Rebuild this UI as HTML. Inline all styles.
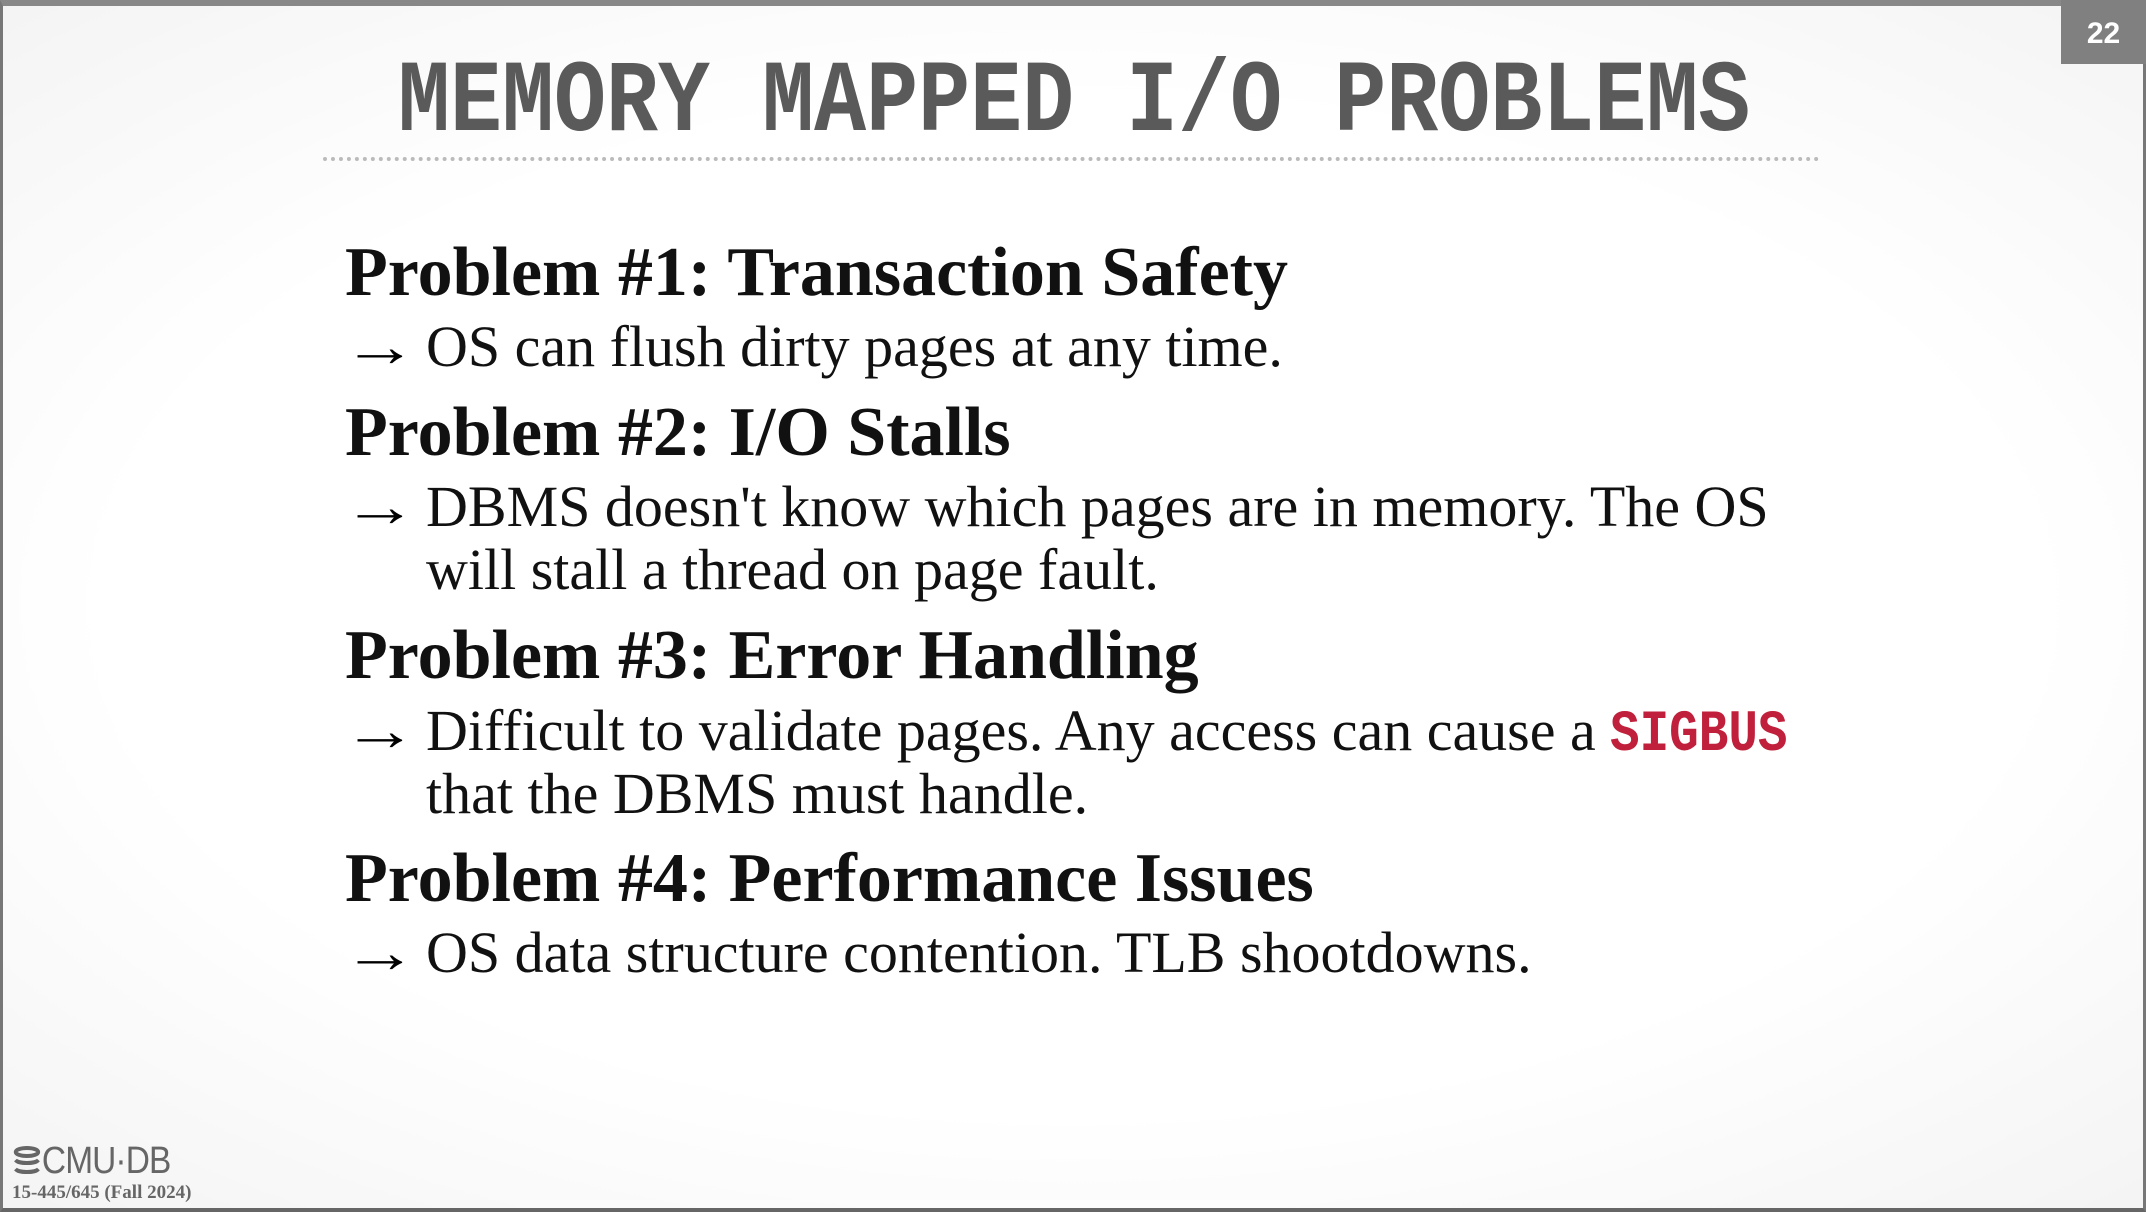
<!DOCTYPE html>
<html><head><meta charset="utf-8"><style>
html,body{margin:0;padding:0}
body{width:2146px;height:1212px;position:relative;overflow:hidden;
background:radial-gradient(ellipse 75% 70% at 50% 50%,#ffffff 60%,#f3f3f3 100%);
font-family:"Liberation Serif",serif;}
.frame{position:absolute;left:0;top:0;width:2146px;height:1212px;box-sizing:border-box;border:3px solid #777;border-top:6px solid #888;border-bottom:4px solid #666}
.pg{position:absolute;right:0;top:0;width:85px;height:64px;background:#808080;color:#fff;font:bold 30px "Liberation Sans",sans-serif;text-align:center;line-height:68px}
.title{position:absolute;left:398px;top:53px;font:bold 90px/1 "Liberation Mono",monospace;color:#5a5a5a;transform:scale(0.963,1.135);transform-origin:0 0;white-space:nowrap}
.dots{position:absolute;left:323px;top:157px;width:1497px;border-top:4px dotted #bbb}
.l{position:absolute;white-space:nowrap;color:#111;line-height:1}
.h{font-weight:bold;font-size:70px;left:345px}
.b{font-size:58px;left:426px}
.a{position:absolute;left:342px;font-size:58px;line-height:1;transform:scaleX(1.3);transform-origin:0 0}
.sig{display:inline-block;font:bold 58px/1 "Liberation Mono",monospace;color:#c0203b;transform:scaleX(0.85);transform-origin:0 0}
.logo{position:absolute;left:12px;top:1140px;font:38px "Liberation Sans",sans-serif;color:#666;letter-spacing:-1px;transform:scaleX(0.88);transform-origin:0 0;white-space:nowrap}
.course{position:absolute;left:12px;top:1182px;font:bold 19px "Liberation Serif",serif;color:#666}
</style></head><body>
<div class="frame"></div>
<div class="pg">22</div>
<div class="title">MEMORY MAPPED I/O PROBLEMS</div>
<div class="dots"></div>

<div class="l h" style="top:238px">Problem #1: Transaction Safety</div>
<div class="a" style="top:318px">→</div><div class="l b" style="top:318px">OS can flush dirty pages at any time.</div>

<div class="l h" style="top:398px">Problem #2: I/O Stalls</div>
<div class="a" style="top:478px">→</div><div class="l b" style="top:478px">DBMS doesn't know which pages are in memory. The OS</div>
<div class="l b" style="top:541px">will stall a thread on page fault.</div>

<div class="l h" style="top:621px">Problem #3: Error Handling</div>
<div class="a" style="top:702px">→</div><div class="l b" style="top:702px">Difficult to validate pages. Any access can cause a <span class="sig">SIGBUS</span></div>
<div class="l b" style="top:765px">that the DBMS must handle.</div>

<div class="l h" style="top:844px">Problem #4: Performance Issues</div>
<div class="a" style="top:924px">→</div><div class="l b" style="top:924px">OS data structure contention. TLB shootdowns.</div>

<div class="logo"><svg width="34" height="30" viewBox="0 0 34 30" style="vertical-align:-3px"><g fill="none" stroke="#666" stroke-width="4"><ellipse cx="17" cy="6" rx="13" ry="4"/><path d="M4 14c3 4 23 4 26 0M4 23c3 4 23 4 26 0"/></g></svg>CMU·DB</div>
<div class="course">15-445/645 (Fall 2024)</div>
</body></html>
